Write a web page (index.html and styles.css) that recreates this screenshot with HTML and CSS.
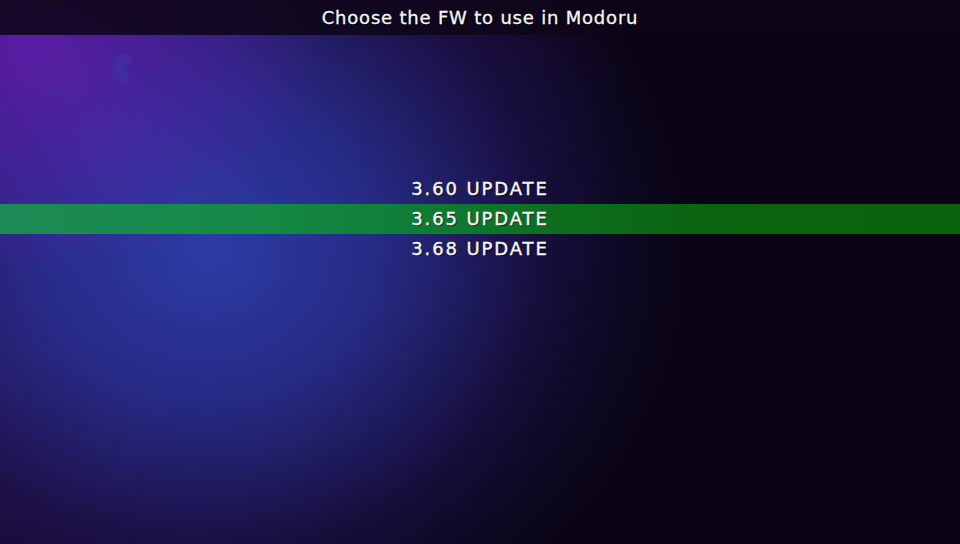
FILE: index.html
```html
<!DOCTYPE html>
<html>
<head>
<meta charset="utf-8">
<link rel="stylesheet" href="styles.css">
</head>
<body>
<div class="screen">
  <svg class="blob" width="30" height="34" viewBox="0 0 30 34"><path d="M8 3 L18 1 L24 5 L23 12 L18 15 L20 22 L22 29 L15 31 L12 25 L6 27 L3 20 L6 13 L3 8 Z" fill="#3a3aa8" opacity="0.45"/></svg>
  <header class="topbar">Choose the FW to use in Modoru</header>
  <ul class="menu">
    <li class="item">3.60 UPDATE</li>
    <li class="item selected">3.65 UPDATE</li>
    <li class="item">3.68 UPDATE</li>
  </ul>
</div>
</body>
</html>
```

FILE: styles.css
```css
html, body {
  margin: 0;
  padding: 0;
  background: #0a0414;
}
.screen {
  position: relative;
  width: 960px;
  height: 544px;
  overflow: hidden;
  font-family: "DejaVu Sans", "Noto Sans", sans-serif;
  color: #f6f6f6;
  background:
    radial-gradient(ellipse 300px 230px at 30px 40px, rgba(110, 30, 190, 0.7), rgba(110, 30, 190, 0) 100%),
    radial-gradient(ellipse 480px 430px at 210px 250px, rgba(44, 60, 165, 1) 0%, rgba(40, 50, 150, 0.8) 35%, rgba(30, 25, 95, 0.45) 70%, rgba(10, 4, 20, 0) 100%),
    radial-gradient(ellipse 620px 560px at 0px 140px, rgba(75, 22, 140, 0.75), rgba(10, 4, 20, 0) 100%),
    #0a0414;
}
.blob {
  position: absolute;
  left: 108px;
  top: 53px;
}
.topbar {
  height: 35px;
  display: flex;
  align-items: center;
  justify-content: center;
  background: rgba(14, 6, 24, 0.88);
  font-size: 18px;
  letter-spacing: 0.8px;
  -webkit-text-stroke: 0.3px #f6f6f6;
  text-shadow: 1px 1px 1px rgba(0, 0, 0, 0.7);
}
.menu {
  list-style: none;
  margin: 139px 0 0 0;
  padding: 0;
}
.item {
  box-sizing: border-box;
  height: 30px;
  padding-bottom: 2px;
  display: flex;
  align-items: center;
  justify-content: center;
  font-size: 18px;
  letter-spacing: 1.9px;
  -webkit-text-stroke: 0.4px #f6f6f6;
  text-shadow: 1px 1px 1px rgba(0, 0, 0, 0.7);
}
.item.selected {
  background: linear-gradient(90deg, #1d8a56 0%, #168a48 25%, #10803a 40%, #0c6e1e 58%, #0a630e 75%, #0a620c 100%);
}
```
